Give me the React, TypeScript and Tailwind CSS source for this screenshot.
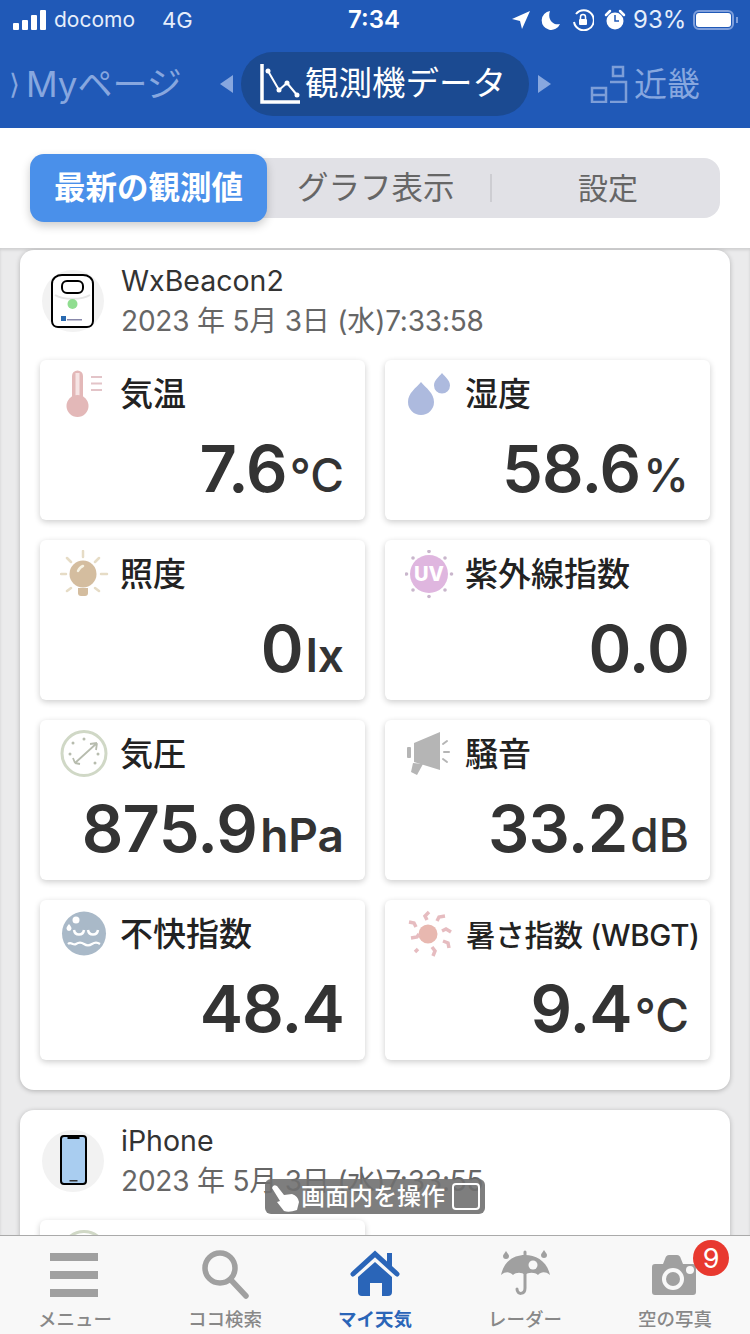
import type { ReactNode } from 'react'

type Reading = {
  label?: string
  value?: string
  unit?: string
  labelClass?: string
  unitClass?: string
  icon: ReactNode
}

function ThermometerIcon() {
  return (
    <svg viewBox="0 0 50 50" className="h-[50px] w-[50px]">
      <path d="M12 30V6a5.500 5.500 0 0 1 11 0v24z" fill="#e3b8b8" />
      <rect x="15.500" y="3" width="4" height="26" fill="#f6e4e4" />
      <circle cx="17.500" cy="36" r="11" fill="#e3b8b8" />
      <path d="M31 7h11M31 13.500h11M31 20h11" stroke="#e3c4c8" strokeWidth="2.200" />
    </svg>
  )
}

function BulbIcon() {
  return (
    <svg viewBox="0 0 50 50" className="h-[50px] w-[50px]">
      <path
        d="M23 1v6M7 8l4 4M39 8l-4 4M1 24h5M41 24h6M7 41l4-3M39 41l-4-3"
        stroke="#e6dcc6"
        strokeWidth="2.500"
        strokeLinecap="round"
      />
      <circle cx="23" cy="24" r="13.500" fill="#d4bd9f" />
      <path d="M18 21c1-2 2-4 5-5" stroke="#f7f3e4" strokeWidth="2.500" strokeLinecap="round" fill="none" />
      <path d="M18 38h10v5a3 3 0 0 1-3 3h-4a3 3 0 0 1-3-3z" fill="#d4bd9f" />
    </svg>
  )
}

function DropsIcon() {
  return (
    <svg viewBox="0 0 50 50" className="h-[50px] w-[50px]">
      <path d="M16 12c5 6 13 11 13 20a13 13 0 0 1-26 0c0-9 8-14 13-20z" fill="#adbade" />
      <path d="M37 3c3 4 8 7 8 12.500a8 8 0 0 1-16 0c0-5.500 5-8.500 8-12.500z" fill="#adbade" />
    </svg>
  )
}

function UvIcon() {
  return (
    <svg viewBox="0 0 50 50" className="h-[50px] w-[50px]">
      <circle cx="24" cy="24" r="19" fill="#dfb6df" />
      <text x="24" y="31" textAnchor="middle" fontSize="20" fontWeight="800" fill="#fff">
        UV
      </text>
      <g fill="#c9b6cc">
        <circle cx="24" cy="1.500" r="1.800" />
        <circle cx="24" cy="46.500" r="1.800" />
        <circle cx="1.500" cy="24" r="1.800" />
        <circle cx="46.500" cy="24" r="1.800" />
        <circle cx="8" cy="8" r="1.800" />
        <circle cx="40" cy="8" r="1.800" />
        <circle cx="8" cy="40" r="1.800" />
        <circle cx="40" cy="40" r="1.800" />
      </g>
    </svg>
  )
}

function GaugeIcon() {
  return (
    <svg viewBox="0 0 50 50" className="h-[50px] w-[50px]">
      <circle cx="24" cy="23.500" r="22" fill="none" stroke="#d0d8c6" strokeWidth="3" />
      <path d="M15 33l22-20M37 13l-7 1M37 13l-1 7M15 33l-2-5M15 33l5 1" stroke="#b7bcae" strokeWidth="1.800" fill="none" />
      <g fill="#b7bcae">
        <circle cx="10" cy="24" r="1.500" />
        <circle cx="13" cy="13" r="1.500" />
        <circle cx="24" cy="9" r="1.500" />
        <circle cx="38" cy="24" r="1.500" />
        <circle cx="35" cy="33" r="1.500" />
      </g>
    </svg>
  )
}

function SpeakerIcon() {
  return (
    <svg viewBox="0 0 50 50" className="h-[50px] w-[50px]">
      <g fill="#b5b5b5">
        <rect x="2" y="17" width="4" height="11" rx="1" />
        <path d="M9 13l26-11v38l-26-8z" />
        <path d="M8 33l10 1-6 11-6-3z" />
      </g>
      <path d="M38 14l4-3M39 22h5M38 29l4 3" stroke="#b5b5b5" strokeWidth="2" strokeLinecap="round" />
    </svg>
  )
}

function DiscomfortIcon() {
  return (
    <svg viewBox="0 0 50 50" className="h-[50px] w-[50px]">
      <circle cx="24" cy="23.500" r="22" fill="#a9b9c8" />
      <circle cx="16" cy="10" r="3.500" fill="#fff" />
      <path d="M9 14c1.500 2 2.500 3 2.500 4.500a2.500 2.500 0 0 1-5 0c0-1.500 1-2.500 2.500-4.500z" fill="#fff" />
      <path d="M14 20c1 6 9 6 10 0M28 20c1 6 9 6 10 0" stroke="#fff" strokeWidth="2.500" fill="none" />
      <path d="M8 34c3-3 5 2 8 0s5-2 8 0 5 2 8 0 5-2 8 0" stroke="#fff" strokeWidth="2.200" fill="none" />
    </svg>
  )
}

function SunIcon() {
  return (
    <svg viewBox="0 0 50 50" className="h-[50px] w-[50px]">
      <circle cx="23" cy="24" r="9.500" fill="#e8b8b0" />
      <path
        d="M24 2l-4 4 2 4M40 6l-6 1-2 4M46 22l-5-3-4 2M44 38l-1-5-5-2M28 46l2-5-3-4M10 42l3-3M6 28l6-1 2-3M4 12l5 1 2 4"
        stroke="#e6bcc0"
        strokeWidth="3.500"
        fill="none"
      />
    </svg>
  )
}

function BeaconIcon() {
  return (
    <svg viewBox="0 0 62 62" className="h-[62px] w-[62px]">
      <path d="M10 14c0-6 5-9 10-9h21c5 0 10 3 10 9v37c0 4-3 6-6 6H16c-3 0-6-2-6-6z" fill="#fff" stroke="#000" strokeWidth="2" />
      <rect x="20" y="11" width="21" height="12" rx="5" fill="#fff" stroke="#000" strokeWidth="2" />
      <path d="M13 25c8 5 27 5 35 0" stroke="#e5e5e5" strokeWidth="2" fill="none" />
      <circle cx="30.500" cy="34" r="5" fill="#90dd90" />
      <rect x="19" y="46" width="5" height="5" fill="#2a6ab0" />
      <rect x="25" y="49" width="15" height="1.500" fill="#88a" />
    </svg>
  )
}

function PhoneIcon() {
  return (
    <svg viewBox="0 0 62 62" className="h-[62px] w-[62px]">
      <rect x="19" y="6" width="25" height="48" rx="3" fill="#a9cdf0" stroke="#000" strokeWidth="2" />
      <rect x="25.500" y="6" width="12" height="3" fill="#000" />
      <rect x="27.500" y="50" width="8" height="1.500" fill="#333" />
    </svg>
  )
}

const readings: Reading[] = [
  { label: '気温', value: '7.6', unit: '°C', icon: <ThermometerIcon /> },
  { label: '湿度', value: '58.6', unit: '%', icon: <DropsIcon /> },
  { label: '照度', value: '0', unit: 'lx', unitClass: 'font-semibold', icon: <BulbIcon /> },
  { label: '紫外線指数', value: '0.0', icon: <UvIcon /> },
  { label: '気圧', value: '875.9', unit: 'hPa', unitClass: 'font-semibold', icon: <GaugeIcon /> },
  { label: '騒音', value: '33.2', unit: 'dB', icon: <SpeakerIcon /> },
  { label: '不快指数', value: '48.4', icon: <DiscomfortIcon /> },
  { label: '暑さ指数 (WBGT)', value: '9.4', unit: '°C', labelClass: 'text-[29.500px] tracking-[-0.3px]', icon: <SunIcon /> },
]

function Tile({ reading }: { reading: Reading }) {
  return (
    <div className="flex h-[160px] flex-col rounded-md bg-white shadow-[0_2px_6px_rgba(0,0,0,0.2)]">
      <div className="mt-[10px] flex h-[50px] items-center pl-5">
        {reading.icon}
        {reading.label && (
          <span
            className={`ml-[11px] whitespace-nowrap font-medium text-[#222] ${reading.labelClass ?? 'text-[33px] -translate-x-[1px]'}`}
          >
            {reading.label}
          </span>
        )}
      </div>
      {reading.value && (
        <div className="mt-[9px] flex h-[80px] items-baseline justify-end whitespace-nowrap pr-[21px] text-[#333]">
          <span className="text-[65px] font-semibold leading-[80px] tracking-[-0.8px]">{reading.value}</span>
          {reading.unit && (
            <span className={`ml-[3px] text-[46px] leading-none ${reading.unitClass ?? 'font-medium'}`}>
              {reading.unit}
            </span>
          )}
        </div>
      )}
    </div>
  )
}

function DeviceHeader({ name, time, icon }: { name: string; time: string; icon: ReactNode }) {
  return (
    <div className="flex h-[110px] items-start pl-[22px]">
      <div className="mt-[20px] flex h-[62px] w-[62px] items-center justify-center rounded-full bg-[#f2f2f2]">{icon}</div>
      <div className="ml-[17px] flex flex-col pt-[11px]">
        <span className="h-[40px] text-[28.500px] leading-[40px] text-[#333]">{name}</span>
        <span className="text-[28px] leading-[40px] tracking-[-0.2px] text-[#666]">{time}</span>
      </div>
    </div>
  )
}

function StatusBar() {
  return (
    <div className="flex h-[40px] items-center text-[21px] text-[#e6eefb]">
      <div className="ml-[13px] flex h-[20px] items-end gap-[3px]">
        <div className="h-[7px] w-[6px] rounded-[1px] bg-white" />
        <div className="h-[10px] w-[6px] rounded-[1px] bg-white" />
        <div className="h-[15px] w-[6px] rounded-[1px] bg-white" />
        <div className="h-[20px] w-[6px] rounded-[1px] bg-white" />
      </div>
      <span className="ml-[8px] w-[108px]">docomo</span>
      <span className="w-[31px] text-[22px]">4G</span>
      <span className="ml-[155px] w-[163px] text-[24px] font-semibold text-white">7:34</span>
      <svg viewBox="0 0 20 20" className="h-[20px] w-[20px]">
        <path d="M19 1L1 9l8 2 2 8z" fill="#fff" />
      </svg>
      <svg viewBox="0 0 20 20" className="ml-[10px] h-[20px] w-[20px]">
        <path d="M9 1a9.500 9.500 0 1 0 10 13C12 16 6 9 9 1z" fill="#fff" />
      </svg>
      <svg viewBox="0 0 22 22" className="ml-[11px] h-[22px] w-[22px]">
        <path d="M4 5a10 10 0 1 1-2 8" fill="none" stroke="#fff" strokeWidth="2" />
        <rect x="7" y="10" width="8" height="6" rx="1" fill="#fff" />
        <path d="M8.500 10V8a2.500 2.500 0 0 1 5 0v2" fill="none" stroke="#fff" strokeWidth="1.500" />
      </svg>
      <svg viewBox="0 0 22 22" className="ml-[10px] h-[22px] w-[22px]">
        <path d="M2 6l4-4M20 6l-4-4" stroke="#fff" strokeWidth="2.500" strokeLinecap="round" />
        <circle cx="11" cy="12" r="8.500" fill="#fff" />
        <path d="M11 6v6h4" stroke="#2059b7" strokeWidth="1.500" fill="none" />
      </svg>
      <span className="ml-[7px] text-[24px]">93%</span>
      <div className="ml-[7px] flex h-[20px] w-[41px] items-center rounded-[6px] border-2 border-[#7f9fdb] p-[1px]">
        <div className="h-full w-full rounded-[3px] bg-white" />
      </div>
      <div className="ml-[2px] h-[6px] w-[2px] bg-[#7f9fdb]" />
    </div>
  )
}

function NavRow() {
  return (
    <div className="mt-[12px] flex h-[64px] items-center text-[#87a7df]">
      <span className="ml-[9px] text-[28px]">⟩</span>
      <span className="ml-[6px] w-[194px] whitespace-nowrap text-[35px] leading-none">Myページ</span>
      <div className="h-0 w-0 border-y-[9px] border-r-[13px] border-y-transparent border-r-[#87a7df]" />
      <div className="ml-[8px] flex h-[64px] w-[288px] items-center rounded-full bg-[#1b4a91] pl-[19px] text-white">
        <svg viewBox="0 0 40 40" className="h-[40px] w-[40px]">
          <path d="M2 0v38h38" fill="none" stroke="#fff" strokeWidth="3.500" />
          <path d="M8 7l11 19 8-7 10 12" fill="none" stroke="#fff" strokeWidth="2" />
          <circle cx="8" cy="7" r="2.500" fill="#fff" />
          <circle cx="19" cy="26" r="2.500" fill="#fff" />
          <circle cx="27" cy="19" r="2.500" fill="#fff" />
          <circle cx="37" cy="31" r="2.500" fill="#fff" />
        </svg>
        <span className="ml-[5px] whitespace-nowrap text-[33.500px] leading-none">観測機データ</span>
      </div>
      <div className="ml-[9px] h-0 w-0 border-y-[9px] border-l-[13px] border-y-transparent border-l-[#87a7df]" />
      <svg viewBox="0 0 38 38" className="ml-[39px] h-[38px] w-[38px]">
        <g fill="none" stroke="#7d9ed8" strokeWidth="2.500">
          <path d="M20 17h16v20H20" />
          <rect x="23" y="2" width="10" height="9" />
          <rect x="2" y="23" width="14" height="14" />
          <path d="M2 30h14" />
        </g>
      </svg>
      <span className="ml-[6px] whitespace-nowrap text-[33px] leading-none">近畿</span>
    </div>
  )
}

function SegmentTabs() {
  return (
    <div className="flex h-[120px] items-center bg-white pl-[30px]">
      <div className="relative flex h-[60px] w-[690px] items-center rounded-[16px] bg-[#e1e1e6] text-[#666]">
        <div className="flex h-[68px] w-[237px] items-center justify-center rounded-[14px] bg-[#4a90ea] text-[31.500px] font-bold whitespace-nowrap text-white shadow-[0_4px_10px_rgba(0,0,0,0.2)]">
          最新の観測値
        </div>
        <span className="ml-[30px] w-[193px] text-[31.500px] whitespace-nowrap">グラフ表示</span>
        <div className="h-[28px] w-[2px] bg-[#cdcdd2]" />
        <span className="ml-[86px] text-[30px]">設定</span>
      </div>
    </div>
  )
}

function TabItem({ label, active, icon }: { label: string; active?: boolean; icon: ReactNode }) {
  return (
    <div className="flex w-[150px] flex-col items-center pt-[14px]">
      <div className="flex h-[50px] items-center justify-center">{icon}</div>
      <span className={`mt-[6px] text-[18.500px] leading-[26px] ${active ? 'font-bold text-[#2a65b8]' : 'font-medium text-[#888]'}`}>
        {label}
      </span>
    </div>
  )
}

function TabBar() {
  return (
    <div className="flex h-[99px] border-t border-[#aaa] bg-[#f8f8f8]">
      <TabItem
        label="メニュー"
        icon={
          <div className="mr-[3px] flex w-[48px] flex-col gap-[10px]">
            <div className="h-[8px] bg-[#a0a0a0]" />
            <div className="h-[8px] bg-[#a0a0a0]" />
            <div className="h-[8px] bg-[#a0a0a0]" />
          </div>
        }
      />
      <TabItem
        label="ココ検索"
        icon={
          <svg viewBox="0 0 50 50" className="h-[50px] w-[50px]">
            <circle cx="20" cy="18" r="15" fill="none" stroke="#a0a0a0" strokeWidth="5.500" />
            <path d="M31 30l15 16" stroke="#a0a0a0" strokeWidth="5.500" strokeLinecap="round" />
          </svg>
        }
      />
      <TabItem
        label="マイ天気"
        active
        icon={
          <svg viewBox="0 0 50 50" className="h-[50px] w-[50px]">
            <path d="M3 24L25 4l22 20" fill="none" stroke="#2a65b8" strokeWidth="5" strokeLinecap="round" />
            <path d="M37 3h5v13h-5z" fill="#2a65b8" />
            <path d="M8 27L25 12l17 15v15a4 4 0 0 1-4 4h-6V33H20v13h-8a4 4 0 0 1-4-4z" fill="#2a65b8" />
          </svg>
        }
      />
      <TabItem
        label="レーダー"
        icon={
          <svg viewBox="0 0 50 50" className="h-[50px] w-[50px]">
            <path d="M1 25C4 11 14 5 25 5s22 6 25 20c-5-4-9-3-12 0-3-3-10-3-13 0-3-3-9-3-12 0-3-3-7-4-12 0z" fill="#a0a0a0" />
            <path d="M25 2v36c0 7-8 7-8 1" fill="none" stroke="#a0a0a0" strokeWidth="3" strokeLinecap="round" />
            <path d="M6 1c2 3 3 4 3 5a3 3 0 0 1-6 0c0-1 1-2 3-5zM44 0c2 3 3 4 3 5a3 3 0 0 1-6 0c0-1 1-2 3-5z" fill="#a0a0a0" />
            <circle cx="33" cy="15" r="4.500" fill="#f8f8f8" />
          </svg>
        }
      />
      <TabItem
        label="空の写真"
        icon={
          <svg viewBox="0 0 44 40" className="mr-[3px] h-[40px] w-[44px]">
            <path d="M3 9h8l2-5c1-3 2-4 4-4h8c2 0 3 1 4 4l2 5h10a3 3 0 0 1 3 3v25a3 3 0 0 1-3 3H3a3 3 0 0 1-3-3V12a3 3 0 0 1 3-3z" fill="#a0a0a0" />
            <circle cx="21" cy="24" r="11" fill="#f8f8f8" />
            <circle cx="21" cy="24" r="7" fill="#a0a0a0" />
            <circle cx="38" cy="15" r="4" fill="#f8f8f8" />
          </svg>
        }
      />
      {/* badge sits on top of the camera icon */}
      <div className="absolute top-[1240px] left-[693px] flex h-[36px] w-[36px] items-center justify-center rounded-full bg-[#e8392f] text-[27px] leading-none text-white">
        9
      </div>
    </div>
  )
}

export default function App() {
  return (
    <div className="relative flex h-[1334px] w-[750px] flex-col overflow-hidden bg-[#ebebec] font-['Inter','Noto_Sans_CJK_JP',sans-serif]">
      <header className="h-[128px] bg-[#2059b7]">
        <StatusBar />
        <NavRow />
      </header>
      <SegmentTabs />

      <main className="flex-1 overflow-hidden px-5 pt-[2px] shadow-[inset_0_2px_3px_rgba(0,0,0,0.12)]">
        <section className="h-[840px] rounded-[14px] bg-white shadow-[0_1px_5px_rgba(0,0,0,0.25)]">
          <DeviceHeader name="WxBeacon2" time="2023 年 5月 3日 (水)7:33:58" icon={<BeaconIcon />} />
          <div className="grid grid-cols-2 gap-5 px-5">
            {readings.map((r) => (
              <Tile key={r.label} reading={r} />
            ))}
          </div>
        </section>
        <section className="mt-5 h-[200px] rounded-[14px] bg-white shadow-[0_1px_5px_rgba(0,0,0,0.25)]">
          <DeviceHeader name="iPhone" time="2023 年 5月 3日 (水)7:33:55" icon={<PhoneIcon />} />
          <div className="grid grid-cols-2 gap-5 px-5">
            <Tile reading={{ icon: <GaugeIcon /> }} />
          </div>
        </section>
      </main>

      <TabBar />

      {/* floating hint over the page content */}
      <div className="absolute top-[1179px] left-[265px] flex h-[35px] w-[220px] items-center rounded-md bg-[#707070]/90 pl-[6px] text-white">
        <svg viewBox="0 0 30 30" className="h-[30px] w-[30px]">
          <path d="M1 6Q2 2 6 4L13 13 21 12Q27 14 28 20L26 28Q18 31 13 29L6 20 9 19Z" fill="#fff" />
        </svg>
        <span className="text-[24px] font-medium leading-none whitespace-nowrap">画面内を操作</span>
        <div className="ml-[7px] h-[27px] w-[28px] rounded-[4px] border-2 border-white" />
      </div>
    </div>
  )
}
